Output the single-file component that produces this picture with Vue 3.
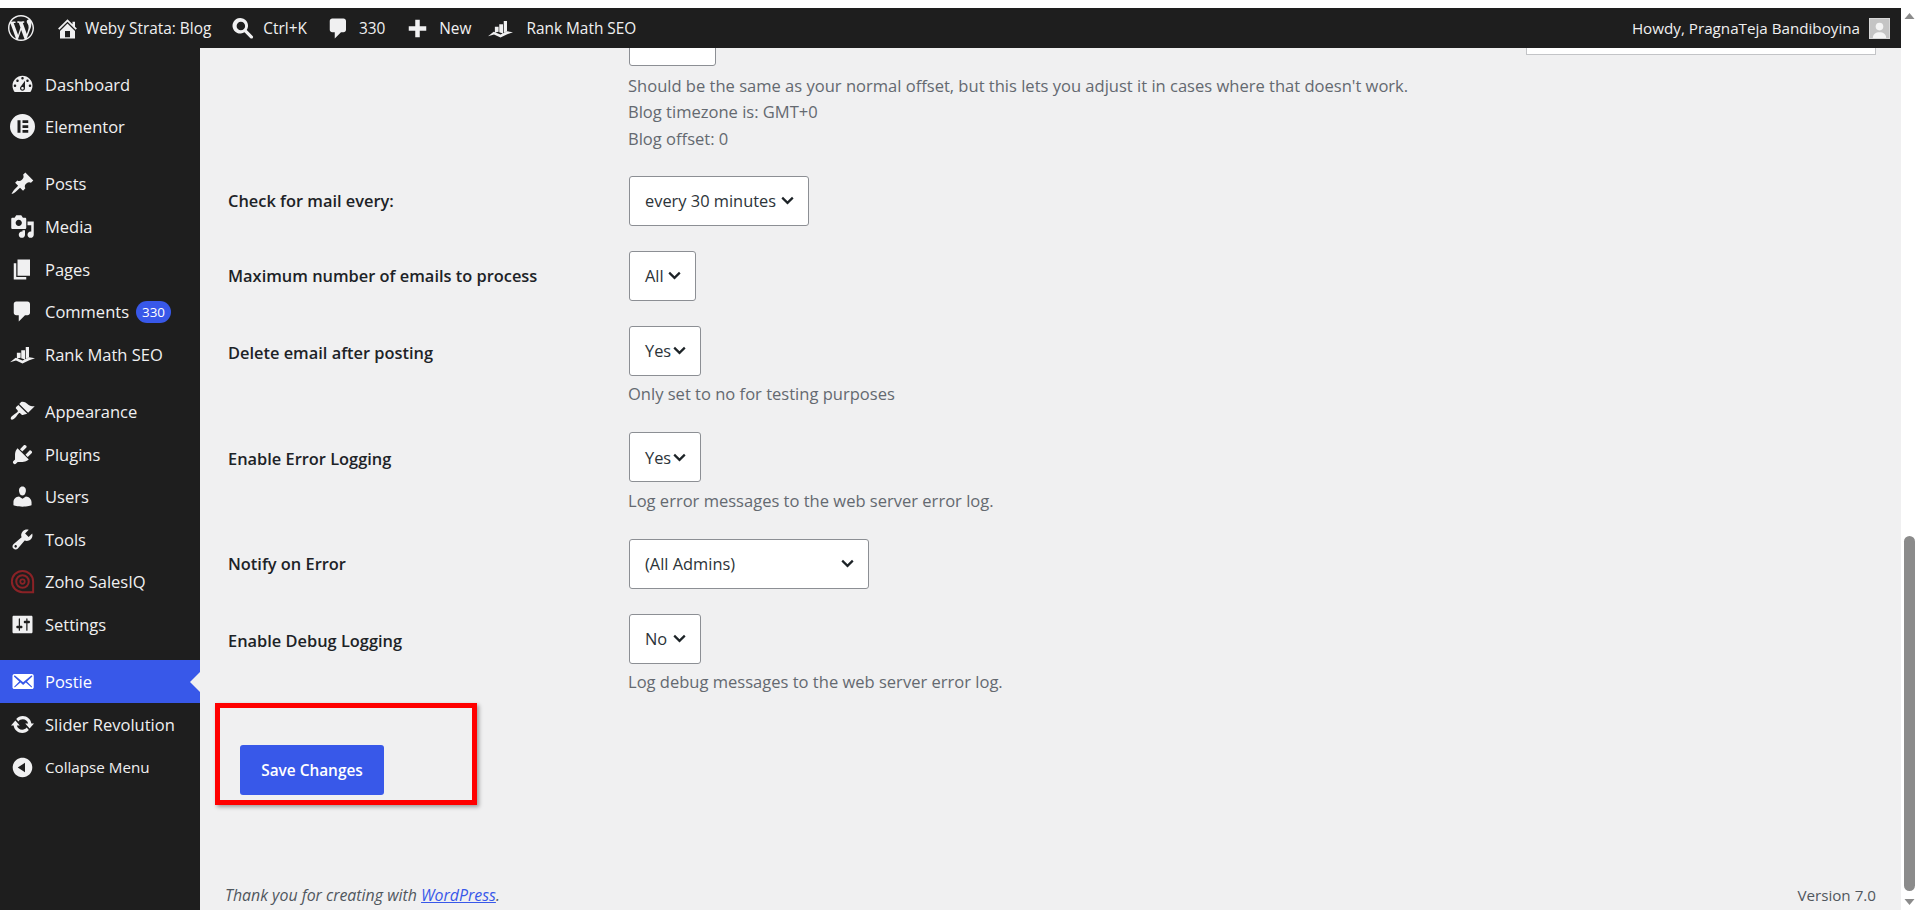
<script setup>
const paths = {
  dashboard: 'M3.76 16h12.48c1.1-1.37 1.76-3.11 1.76-5 0-4.42-3.58-8-8-8s-8 3.58-8 8c0 1.89.66 3.63 1.76 5zM10 4c.55 0 1 .45 1 1s-.45 1-1 1-1-.45-1-1 .45-1 1-1zM6 6c.55 0 1 .45 1 1s-.45 1-1 1-1-.45-1-1 .45-1 1-1zm8 0c.55 0 1 .45 1 1s-.45 1-1 1-1-.45-1-1 .45-1 1-1zm-5.37 5.55L12 7v6c0 1.1-.9 2-2 2s-2-.9-2-2c0-.57.24-1.08.63-1.45zM4 10c.55 0 1 .45 1 1s-.45 1-1 1-1-.45-1-1 .45-1 1-1zm12 0c.55 0 1 .45 1 1s-.45 1-1 1-1-.45-1-1 .45-1 1-1zm-5 3c0-.55-.45-1-1-1s-1 .45-1 1 .45 1 1 1 1-.45 1-1z',
  elementor: 'M10 0a10 10 0 1 0 0 20a10 10 0 0 0 0-20zM6 5h2.4v10H6zM10 5h4.6v2.2H10zM10 8.9h4.6v2.2H10zM10 12.8h4.6V15H10z',
  post: 'M10.44 3.02l1.82-1.82 6.36 6.35-1.83 1.82c-1.05-.68-2.48-.57-3.41.36l-.75.75c-.92.93-1.04 2.35-.35 3.41l-1.83 1.82-2.41-2.41-2.8 2.79c-.42.42-3.38 2.71-3.8 2.29s1.86-3.39 2.28-3.81l2.79-2.79L4.1 9.36l1.83-1.82c1.05.69 2.48.57 3.4-.36l.75-.75c.93-.92 1.05-2.35.36-3.41z',
  media: 'M13 11V4c0-.55-.45-1-1-1h-1.67L9 1H5L3.67 3H2c-.55 0-1 .45-1 1v7c0 .55.45 1 1 1h10c.55 0 1-.45 1-1zM7 4.5c1.38 0 2.5 1.12 2.5 2.5S8.38 9.5 7 9.5 4.5 8.38 4.5 7 5.62 4.5 7 4.5zM14 6h5v10.5c0 1.38-1.12 2.5-2.5 2.5S14 17.88 14 16.5s1.12-2.5 2.5-2.5c.17 0 .34.02.5.05V9h-3V6zm-4 8.05V13h2v3.5c0 1.38-1.12 2.5-2.5 2.5S7 17.88 7 16.5 8.12 14 9.5 14c.17 0 .34.02.5.05z',
  page: 'M6 15V2h10v13H6zm-1 1h8v2H3V5h2v11z',
  comment: 'M5 2h9c1.1 0 2 .9 2 2v7c0 1.1-.9 2-2 2h-2l-5 5v-5H5c-1.1 0-2-.9-2-2V4c0-1.1.9-2 2-2z',
  rank: 'M5.5 8.5h3v4l-3 .6zM9 6.5h3v7.4l-3-.9zM12.6 4h2.6v8.2l-2.6 1.1zM0 16.2l4.5-3.7 5.5 2.3 5.4-2.6 4.6.8-4.6 1.6-5.4 2.5-5.2-2.3z',
  appearance: 'M14.48 11.06L7.41 3.99l1.5-1.5c.5-.56 2.3-.47 3.51.32 1.21.8 1.43 1.28 2.91 2.1 1.18.64 2.45 1.26 4.45.85zm-.71.71L6.7 4.7 4.93 6.47c-.39.39-.39 1.02 0 1.41l1.06 1.06c.39.39.39 1.03 0 1.42-.6.6-1.43 1.11-2.21 1.69-.35.26-.7.53-1.01.84C1.43 13.71-.02 15.42.84 16.29c.86.86 2.58-.58 3.52-1.53.31-.31.58-.66.84-1.01.58-.78 1.09-1.61 1.69-2.21.39-.39 1.03-.39 1.42 0l1.06 1.06c.39.39 1.02.39 1.41 0z',
  plugin: 'M13.11 4.36L9.87 7.6 8 5.73l3.24-3.24c.35-.34 1.05-.2 1.56.32.52.51.66 1.21.31 1.55zm-8 1.77l.91-1.12 9.01 9.01-1.19.84c-.71.71-2.63 1.16-3.82 1.16H6.14L4.9 17.26c-.59.59-1.54.59-2.12 0-.59-.58-.59-1.53 0-2.12l1.24-1.24v-3.88c0-1.13.4-3.19 1.09-3.89zm7.26 3.97l3.24-3.24c.34-.35 1.04-.21 1.55.31.52.51.66 1.21.31 1.55l-3.24 3.25z',
  users: 'M10 9.25c-2.27 0-2.73-3.44-2.73-3.44C7 4.02 7.82 2 9.97 2c2.16 0 2.98 2.02 2.71 3.81 0 0-.41 3.44-2.68 3.44zm0 2.57L12.72 10c2.39 0 4.52 2.33 4.52 4.53v2.49s-3.65 1.13-7.24 1.13c-3.65 0-7.24-1.13-7.24-1.13v-2.49c0-2.25 1.94-4.48 4.47-4.48z',
  tools: 'M16.68 9.77c-1.34 1.34-3.3 1.67-4.95.99l-5.41 6.52c-.99.99-2.59.99-3.58 0s-.99-2.59 0-3.57l6.52-5.42c-.68-1.65-.35-3.61.99-4.95 1.28-1.28 3.12-1.62 4.72-1.06l-2.89 2.89 2.82 2.82 2.86-2.87c.53 1.58.18 3.39-1.08 4.65zM3.81 16.21c.4.39 1.04.39 1.43 0 .4-.4.4-1.04 0-1.43-.39-.4-1.03-.4-1.43 0-.39.39-.39 1.03 0 1.43z',
  settings: 'M18 16V4c0-.55-.45-1-1-1H3c-.55 0-1 .45-1 1v12c0 .55.45 1 1 1h14c.55 0 1-.45 1-1zM8 11h1c.55 0 1 .45 1 1s-.45 1-1 1H8v1.5c0 .28-.22.5-.5.5s-.5-.22-.5-.5V13H6c-.55 0-1-.45-1-1s.45-1 1-1h1V5.5c0-.28.22-.5.5-.5s.5.22.5.5V11zm5-2h-1c-.55 0-1-.45-1-1s.45-1 1-1h1V5.5c0-.28.22-.5.5-.5s.5.22.5.5V7h1c.55 0 1 .45 1 1s-.45 1-1 1h-1v5.5c0 .28-.22.5-.5.5s-.5-.22-.5-.5V9z',
  email: 'M19 14.5v-9c0-.83-.67-1.5-1.5-1.5H3.49c-.83 0-1.5.67-1.5 1.5v9c0 .83.67 1.5 1.5 1.5H17.5c.83 0 1.5-.67 1.5-1.5zm-1.31-9.11c.33.33.15.67-.03.84L13.6 9.95l3.9 4.06c.12.14.2.36.06.51-.13.16-.43.15-.56.05l-4.37-3.73-2.14 1.95-2.13-1.95-4.37 3.73c-.13.1-.43.11-.56-.05-.14-.15-.06-.37.06-.51l3.9-4.06-4.06-3.72c-.18-.17-.36-.51-.03-.84s.67-.17.95.07l6.24 5.04 6.25-5.04c.28-.24.62-.4.95-.07z',
  update: 'M10.2 3.28c3.53 0 6.43 2.61 6.92 6h2.08l-3.5 4-3.5-4h2.32c-.45-1.97-2.21-3.45-4.32-3.45-1.45 0-2.73.71-3.54 1.78L4.95 5.66C6.23 4.2 8.11 3.28 10.2 3.28zm-.4 13.44c-3.52 0-6.43-2.61-6.92-6H.8l3.5-4c1.17 1.33 2.33 2.67 3.5 4H5.48c.45 1.97 2.21 3.45 4.32 3.45 1.45 0 2.73-.71 3.54-1.78l1.71 1.95c-1.28 1.46-3.15 2.38-5.25 2.38z',
  collapse: 'M10 2.16c4.33 0 7.84 3.51 7.84 7.84s-3.51 7.84-7.84 7.84S2.16 14.33 2.16 10 5.71 2.16 10 2.16zm2 11.72V6.12L6.18 9.97z',
  wordpress: 'M20 10c0-5.51-4.49-10-10-10C4.48 0 0 4.49 0 10c0 5.52 4.48 10 10 10 5.51 0 10-4.48 10-10zM7.78 15.37L4.37 6.22c.55-.02 1.17-.08 1.17-.08.5-.06.44-1.13-.06-1.11 0 0-1.45.11-2.37.11-.18 0-.37 0-.58-.01C4.12 2.69 6.87 1.11 10 1.11c2.33 0 4.45.87 6.05 2.34-.68-.11-1.65.39-1.65 1.58 0 .74.45 1.36.9 2.1.35.61.55 1.36.55 2.46 0 1.49-1.4 5-1.4 5l-3.03-8.37c.54-.02.82-.17.82-.17.5-.05.44-1.25-.06-1.22 0 0-1.44.12-2.38.12-.87 0-2.33-.12-2.33-.12-.5-.03-.56 1.2-.06 1.22l.92.08 1.26 3.41zM17.41 10c.24-.64.74-1.87.43-4.25.7 1.29 1.05 2.71 1.05 4.25 0 3.29-1.73 6.24-4.4 7.78.97-2.59 1.94-5.2 2.92-7.78zM6.1 18.09C3.12 16.65 1.11 13.53 1.11 10c0-1.3.23-2.48.72-3.59C3.25 10.3 4.67 14.2 6.1 18.09zm4.03-6.63l2.58 6.98c-.86.29-1.76.45-2.71.45-.79 0-1.57-.11-2.29-.33.81-2.38 1.62-4.74 2.42-7.1z',
  home: 'M16 8.5l1.53 1.53-1.06 1.06L10 4.62l-6.47 6.47-1.06-1.06L10 2.5l4 4v-2h2v4zm-6-2.46l6 5.99V18H4v-5.97zM12 17v-5H8v5h4z',
  search: 'M12.6 11.2l4.7 4.7c.5.5.5 1.3 0 1.8s-1.3.5-1.8 0l-4.7-4.7a6.2 6.2 0 1 1 1.8-1.8zM7.9 4.6a3.4 3.4 0 1 0 0 6.8 3.4 3.4 0 0 0 0-6.8z',
  plus: 'M8.2 3h3.6v5.2H17v3.6h-5.2V17H8.2v-5.2H3V8.2h5.2z'
}

const barLeft = [
  { icon: 'home', text: 'Weby Strata: Blog', cls: 'b-home' },
  { icon: 'search', text: 'Ctrl+K', cls: 'b-search' },
  { icon: 'comment', text: '330', cls: 'b-comment' },
  { icon: 'plus', text: 'New', cls: 'b-new' },
  { icon: 'rank', text: 'Rank Math SEO', cls: 'b-rank' }
]

const menuGroups = [
  [
    { icon: 'dashboard', label: 'Dashboard' },
    { icon: 'elementor', label: 'Elementor' }
  ],
  [
    { icon: 'post', label: 'Posts' },
    { icon: 'media', label: 'Media' },
    { icon: 'page', label: 'Pages' },
    { icon: 'comment', label: 'Comments', badge: '330' },
    { icon: 'rank', label: 'Rank Math SEO' }
  ],
  [
    { icon: 'appearance', label: 'Appearance' },
    { icon: 'plugin', label: 'Plugins' },
    { icon: 'users', label: 'Users' },
    { icon: 'tools', label: 'Tools' },
    { icon: 'zoho', label: 'Zoho SalesIQ' },
    { icon: 'settings', label: 'Settings' }
  ],
  [
    { icon: 'email', label: 'Postie', current: true },
    { icon: 'update', label: 'Slider Revolution' },
    { icon: 'collapse', label: 'Collapse Menu', small: true }
  ]
]

const rows = [
  { label: 'Check for mail every:', value: 'every 30 minutes', width: 180 },
  { label: 'Maximum number of emails to process', value: 'All', width: 67 },
  { label: 'Delete email after posting', value: 'Yes', width: 72, help: 'Only set to no for testing purposes' },
  { label: 'Enable Error Logging', value: 'Yes', width: 72, help: 'Log error messages to the web server error log.' },
  { label: 'Notify on Error', value: '(All Admins)', width: 240 },
  { label: 'Enable Debug Logging', value: 'No', width: 72, help: 'Log debug messages to the web server error log.' }
]
</script>

<template>
  <div class="page">
    <div class="frame">
      <header class="adminbar">
        <svg class="wp-logo" viewBox="0 0 20 20"><path :d="paths.wordpress" /></svg>
        <div v-for="item in barLeft" :key="item.text" class="bar-item" :class="item.cls">
          <svg class="bar-icon" viewBox="0 0 20 20"><path :d="paths[item.icon]" fill-rule="evenodd" /></svg>
          <span>{{ item.text }}</span>
        </div>
        <div class="howdy">
          <span>Howdy, PragnaTeja Bandiboyina</span>
          <svg class="avatar" viewBox="0 0 20 20">
            <rect width="20" height="20" fill="#c4c4c4" />
            <circle cx="10" cy="8" r="4" style="fill: #f4f4f4" />
            <path d="M3 20c0-4 3-6 7-6s7 2 7 6z" style="fill: #f4f4f4" />
          </svg>
        </div>
      </header>

      <div class="body">
        <nav class="sidebar">
          <ul v-for="(group, i) in menuGroups" :key="i" class="menu-group">
            <li
              v-for="item in group"
              :key="item.label"
              class="menu-item"
              :class="{ current: item.current, small: item.small }"
            >
              <svg v-if="item.icon === 'zoho'" class="menu-icon zoho" viewBox="0 0 20 20" fill="none" stroke="#8a2226">
                <path stroke-width="1.6" d="M10 1.5a8.5 8.5 0 1 0 0 17h8.5V10A8.5 8.5 0 0 0 10 1.5z" />
                <circle cx="10" cy="10" r="5" stroke-width="1.6" />
                <circle cx="10" cy="10" r="1.8" stroke-width="1.4" />
              </svg>
              <svg v-else class="menu-icon" viewBox="0 0 20 20"><path :d="paths[item.icon]" fill-rule="evenodd" /></svg>
              <span>{{ item.label }}</span>
              <span v-if="item.badge" class="badge">{{ item.badge }}</span>
            </li>
          </ul>
        </nav>

        <main class="main">
          <div class="scrolled">
            <div class="top-row">
              <div class="select top-select"><span></span></div>
              <div class="top-input"></div>
            </div>
            <div class="offset-help">
              <p>Should be the same as your normal offset, but this lets you adjust it in cases where that doesn't work.</p>
              <p>Blog timezone is: GMT+0</p>
              <p>Blog offset: 0</p>
            </div>

            <div class="form">
              <div v-for="row in rows" :key="row.label" class="form-row">
                <label class="form-label" :class="{ 'with-help': row.help }">{{ row.label }}</label>
                <div class="field">
                  <div class="select" :style="{ width: row.width + 'px' }">
                    <span>{{ row.value }}</span>
                    <svg class="chevron" viewBox="0 0 13 9"><path d="M1.2 1.6l5.3 5.3 5.3-5.3" /></svg>
                  </div>
                  <p v-if="row.help" class="help">{{ row.help }}</p>
                </div>
              </div>
            </div>

            <div class="save-box">
              <button class="save" type="button">Save Changes</button>
            </div>
          </div>

          <footer class="footer">
            <span class="thanks">Thank you for creating with <a href="#">WordPress</a>.</span>
            <span class="version">Version 7.0</span>
          </footer>
        </main>
      </div>
    </div>

    <aside class="scrollbar">
      <svg class="arrow" viewBox="0 0 17 17"><path d="M8.5 5l5 6h-10z" /></svg>
      <div class="thumb"></div>
      <svg class="arrow" viewBox="0 0 17 17"><path d="M3.5 6h10l-5 6z" /></svg>
    </aside>
  </div>
</template>

<style scoped>
.page {
  display: flex;
  height: 910px;
  box-sizing: border-box;
  padding-top: 8px;
  background: #fff;
  overflow: hidden;
  font-family: "Open Sans", "Noto Sans", sans-serif;
}

.frame {
  flex: 1;
  min-width: 0;
  display: flex;
  flex-direction: column;
}

/* top bar */
.adminbar {
  height: 40px;
  flex: none;
  display: flex;
  align-items: center;
  background: #1e1e1e;
  color: #f0f0f1;
  font-size: 15.4px;
  position: relative;
  z-index: 2;
}

.adminbar svg path {
  fill: #f0f0f1;
}

.wp-logo {
  width: 26px;
  height: 26px;
  margin: 0 21px 0 8px;
}

.bar-item {
  display: flex;
  align-items: center;
}

.bar-icon {
  width: 25px;
  height: 25px;
  flex: none;
}

.b-home { margin-right: 20px; }
.b-home span { margin-left: 5px; }
.b-search { margin-right: 19px; }
.b-search span { margin-left: 7px; }
.b-comment { margin-right: 20px; }
.b-comment span { margin-left: 8px; }
.b-new { margin-right: 17px; }
.b-new span { margin-left: 9px; }
.b-rank span { margin-left: 13px; }

.howdy {
  margin-left: auto;
  display: flex;
  align-items: center;
  gap: 9px;
  padding-right: 11px;
  font-size: 15.2px;
}

.avatar {
  width: 21px;
  height: 21px;
  border: 1px solid #d8d8d8;
  box-sizing: border-box;
}

.body {
  flex: 1;
  min-height: 0;
  display: flex;
}

/* sidebar */
.sidebar {
  width: 200px;
  flex: none;
  background: #1e1e1e;
  color: #f0f0f1;
  padding-top: 15px;
  font-size: 16.5px;
}

.menu-group {
  list-style: none;
  margin: 0 0 14.5px;
  padding: 0;
}

.menu-item {
  height: 42.6px;
  display: flex;
  align-items: center;
  padding-left: 10px;
  position: relative;
}

.menu-icon {
  width: 25px;
  height: 25px;
  flex: none;
  margin-right: 10px;
  fill: #f0f0f1;
}

.menu-icon.zoho {
  fill: none;
}

.menu-item.current {
  background: #3858e9;
  color: #fff;
}

.menu-item.current .menu-icon {
  fill: #fff;
}

.menu-item.current::after {
  content: "";
  position: absolute;
  right: 0;
  top: 50%;
  margin-top: -10px;
  border: 10px solid transparent;
  border-right-color: #f0f0f1;
}

.menu-item.small {
  font-size: 15.2px;
  padding-top: 1px;
  box-sizing: border-box;
}

.badge {
  margin-left: 7px;
  min-width: 35px;
  height: 22px;
  line-height: 22px;
  text-align: center;
  border-radius: 11px;
  background: #3858e9;
  color: #fff;
  font-size: 13.4px;
}

/* main column */
.main {
  flex: 1;
  min-width: 0;
  background: #f0f0f1;
  padding: 0 25px 0 28px;
  display: flex;
  flex-direction: column;
  overflow: hidden;
  font-size: 16.55px;
}

.scrolled {
  flex: 1;
  margin-top: -32px;
}

.top-row {
  display: flex;
  justify-content: space-between;
  padding-left: 401px;
}

.top-select {
  width: 87px;
}

.top-input {
  width: 350px;
  height: 39px;
  background: #fff;
  border: 1px solid #c3c4c7;
  box-sizing: border-box;
}

.offset-help {
  margin: 7px 0 0 400px;
  color: #646970;
  line-height: 26.3px;
}

.offset-help p,
.help {
  margin: 0;
}

.form {
  margin-top: 24px;
  display: flex;
  flex-direction: column;
  gap: 25px;
}

.form-row {
  display: flex;
}

.form-label {
  width: 401px;
  flex: none;
  height: 50px;
  line-height: 50px;
  font-size: 16.4px;
  font-weight: 600;
  color: #1d2327;
}

.form-label.with-help {
  padding-top: 2px;
}

.select {
  height: 50px;
  box-sizing: border-box;
  display: flex;
  align-items: center;
  justify-content: space-between;
  padding: 0 14px 0 15px;
  background: #fff;
  border: 1px solid #8c8f94;
  border-radius: 3px;
  color: #2c3338;
  font-size: 16.4px;
}

.chevron {
  width: 13px;
  height: 9px;
  flex: none;
  fill: none;
  stroke: #1d2327;
  stroke-width: 2.2;
}

.help {
  margin: 5.5px 0 0 -1px;
  color: #646970;
  line-height: 26px;
  height: 26px;
}

.save-box {
  width: 262px;
  height: 102px;
  box-sizing: border-box;
  margin: 7.5px 0 0 -13px;
  padding: 37px 0 0 20px;
  border: 5px solid #f00;
  box-shadow: 2px 2px 4px rgba(0, 0, 0, 0.35);
}

.save {
  width: 144px;
  height: 50px;
  padding: 2px 0 0;
  border: none;
  border-radius: 3px;
  background: #3858e9;
  color: #fff;
  font: 600 15.4px "Open Sans", sans-serif;
}

.footer {
  flex: none;
  height: 30px;
  display: flex;
  justify-content: space-between;
  align-items: center;
  color: #50575e;
  font-size: 15.2px;
}

.thanks {
  font-style: italic;
  font-size: 15.9px;
  margin-left: -3px;
}

.thanks a {
  color: #3858e9;
}

/* browser scrollbar */
.scrollbar {
  width: 17px;
  flex: none;
  display: flex;
  flex-direction: column;
  align-items: center;
  background: #fff;
}

.arrow {
  width: 17px;
  height: 17px;
  flex: none;
  fill: #8b8b8b;
}

.thumb {
  width: 11px;
  flex: 1;
  margin: 511px 0 2px;
  border-radius: 6px;
  background: #8b8b8b;
}
</style>
